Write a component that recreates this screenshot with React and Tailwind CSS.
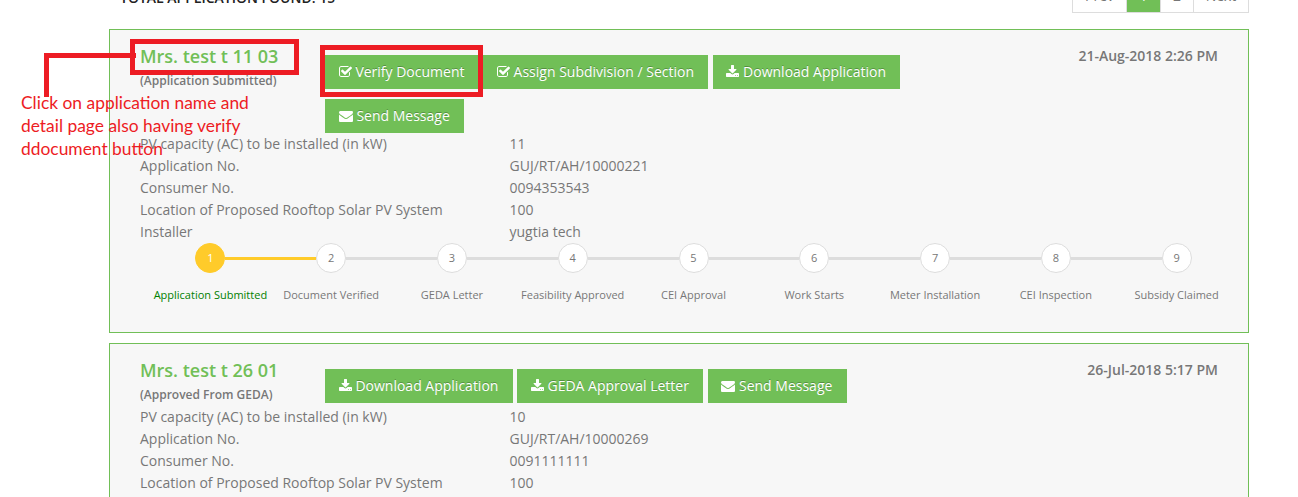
import React from 'react';

const PATHS = {
  check:
    'M1472 930v318q0 119-84.5 203.5t-203.5 84.5h-832q-119 0-203.5-84.5t-84.5-203.5v-832q0-119 84.5-203.5t203.5-84.5h832q63 0 117 25 15 7 18 23 3 17-9 29l-49 49q-10 10-23 10-3 0-9-2-23-6-45-6h-832q-66 0-113 47t-47 113v832q0 66 47 113t113 47h832q66 0 113-47t47-113v-254q0-13 9-22l64-64q10-10 23-10 6 0 12 3 20 8 20 29zm231-489l-814 814q-24 24-57 24t-57-24l-430-430q-24-24-24-57t24-57l110-110q24-24 57-24t57 24l263 263 647-647q24-24 57-24t57 24l110 110q24 24 24 57t-24 57z',
  download:
    'M1344 1344q0-26-19-45t-45-19-45 19-19 45 19 45 45 19 45-19 19-45zm256 0q0-26-19-45t-45-19-45 19-19 45 19 45 45 19 45-19 19-45zm128-224v320q0 40-28 68t-68 28h-1472q-40 0-68-28t-28-68v-320q0-40 28-68t68-28h465l135 136q58 56 136 56t136-56l136-136h464q40 0 68 28t28 68zm-325-569q17 41-14 70l-448 448q-18 19-45 19t-45-19l-448-448q-31-29-14-70 17-39 59-39h256v-448q0-26 19-45t45-19h256q26 0 45 19t19 45v448h256q42 0 59 39z',
  mail:
    'M1792 710v794q0 66-47 113t-113 47h-1472q-66 0-113-47t-47-113v-794q44 49 101 87 362 246 497 345 57 42 92.5 65.5t94.5 48 110 24.5h2q51 0 110-24.5t94.5-48 92.5-65.5q170-123 498-345 57-39 100-87zm0-294q0 79-49 151t-122 123q-376 261-468 325-10 7-42.5 31t-54 38.5-52 32.5-57.5 27-50 9h-2q-23 0-50-9t-57.5-27-52-32.5-54-38.5-42.5-31q-91-64-262-182.5t-205-142.5q-62-42-117-115.5t-55-136.5q0-78 41.5-130t118.5-52h1472q65 0 112.5 47t47.5 113z',
};

// Each glyph is cropped to its own advance width.
const BOXES = {
  check: { viewBox: '64 0 1664 1792', cls: 'h-[14px] w-[13px]' },
  download: { viewBox: '64 0 1664 1792', cls: 'h-[14px] w-[13px]' },
  mail: { viewBox: '0 0 1792 1792', cls: 'h-[14px] w-[14px]' },
};

function ActionButton({ icon, children }) {
  const box = BOXES[icon];
  return (
    <button className="flex h-[34px] items-center gap-[3.6px] whitespace-nowrap bg-[#71bf57] pl-[13.8px] pr-[14.2px] text-sm text-white [text-shadow:0_-1px_0_rgba(0,0,0,0.25)]">
      <svg className={box.cls} viewBox={box.viewBox} fill="currentColor">
        <path d={PATHS[icon]} />
      </svg>
      <span>{children}</span>
    </button>
  );
}

const STEPS = [
  'Application Submitted',
  'Document Verified',
  'GEDA Letter',
  'Feasibility Approved',
  'CEI Approval',
  'Work Starts',
  'Meter Installation',
  'CEI Inspection',
  'Subsidy Claimed',
];

function Stepper() {
  return (
    <ol className="ml-[10px] grid w-[1087px] grid-cols-9">
      {STEPS.map((label, i) => (
        <li key={label} className="flex flex-col items-center">
          <div className="flex w-full items-center">
            <div
              className={
                'h-[3px] flex-1 ' +
                (i === 0 ? 'bg-transparent' : i === 1 ? 'bg-[#ffcb2a]' : 'bg-[#dddddd]')
              }
            />
            <div
              className={
                'flex h-[30px] w-[30px] items-center justify-center rounded-full border text-[11px] ' +
                (i === 0
                  ? 'border-[#ffcb2a] bg-[#ffcb2a] text-white'
                  : 'border-[#dddddd] bg-white text-[#777777]')
              }
            >
              {i + 1}
            </div>
            <div
              className={
                'h-[3px] flex-1 ' +
                (i === 8 ? 'bg-transparent' : i === 0 ? 'bg-[#ffcb2a]' : 'bg-[#dddddd]')
              }
            />
          </div>
          <span
            className={
              'mt-[11px] whitespace-nowrap text-[11px] leading-[22px] ' +
              (i === 0 ? 'text-[#008000]' : 'text-[#777777]')
            }
          >
            {label}
          </span>
        </li>
      ))}
    </ol>
  );
}

function Card({ name, status, date, buttons, rows, headerClass, cardClass, steps }) {
  return (
    <section className={'border border-[#71bf57] bg-[#f7f7f7] px-[30px] ' + cardClass}>
      <header className={'flex items-start ' + headerClass}>
        <div className="w-[185px] shrink-0 pt-[13px] font-semibold">
          <h2 className="text-[18px] leading-[26px] text-[#71bf57]">{name}</h2>
          <p className="mt-px text-[12px] leading-[22px]">({status})</p>
        </div>
        <div className="flex w-[640px] flex-wrap gap-x-[4.5px] gap-y-[10px] pt-[25px]">
          {buttons.map(([icon, label]) => (
            <ActionButton key={label} icon={icon}>
              {label}
            </ActionButton>
          ))}
        </div>
        <time className="ml-auto whitespace-nowrap pt-[15px] font-semibold leading-[22px]">{date}</time>
      </header>
      <dl>
        {rows.map(([k, v]) => (
          <div key={k} className="flex h-[22px] leading-[22px]">
            <dt className="w-[369.5px]">{k}</dt>
            <dd>{v}</dd>
          </div>
        ))}
      </dl>
      {steps && <Stepper />}
    </section>
  );
}

export default function App() {
  return (
    <div className="relative h-[497px] w-[1298px] overflow-hidden bg-white font-['Open_Sans','Noto_Sans',sans-serif] text-sm text-[#777777]">
      <div className="mx-[109px] w-[1140px]">
        <div className="flex h-[29px] items-start justify-between">
          <h1 className="-mt-[13px] pl-[11px] font-semibold leading-[22px] text-[#222222]">
            TOTAL APPLICATION FOUND: 15
          </h1>
          <nav className="-mt-[21px] flex h-[34px] border border-[#dddddd] leading-[32px]">
            <span className="w-[53px] text-center">Prev</span>
            <span className="w-[34px] border-l border-[#dddddd] bg-[#71bf57] text-center text-white">1</span>
            <span className="w-[33px] border-l border-[#dddddd] text-center">2</span>
            <span className="w-[55px] border-l border-[#dddddd] text-center">Next</span>
          </nav>
        </div>
        <Card
          name="Mrs. test t 11 03"
          status="Application Submitted"
          date="21-Aug-2018 2:26 PM"
          cardClass="h-[304px]"
          headerClass="h-[103px]"
          buttons={[
            ['check', 'Verify Document'],
            ['check', 'Assign Subdivision / Section'],
            ['download', 'Download Application'],
            ['mail', 'Send Message'],
          ]}
          rows={[
            ['PV capacity (AC) to be installed (in kW)', '11'],
            ['Application No.', 'GUJ/RT/AH/10000221'],
            ['Consumer No.', '0094353543'],
            ['Location of Proposed Rooftop Solar PV System', '100'],
            ['Installer', 'yugtia tech'],
          ]}
          steps
        />
        <Card
          name="Mrs. test t 26 01"
          status="Approved From GEDA"
          date="26-Jul-2018 5:17 PM"
          cardClass="mt-[10px] h-[304px]"
          headerClass="h-[62px]"
          buttons={[
            ['download', 'Download Application'],
            ['download', 'GEDA Approval Letter'],
            ['mail', 'Send Message'],
          ]}
          rows={[
            ['PV capacity (AC) to be installed (in kW)', '10'],
            ['Application No.', 'GUJ/RT/AH/10000269'],
            ['Consumer No.', '0091111111'],
            ['Location of Proposed Rooftop Solar PV System', '100'],
          ]}
        />
      </div>

      {/* Review markup drawn over the page */}
      <div className="absolute left-[130px] top-[39px] h-[36px] w-[169px] border-[5px] border-[#ed1c24]" />
      <div className="absolute left-[320px] top-[45px] h-[52px] w-[163px] border-[5px] border-[#ed1c24]" />
      <div className="absolute left-[44px] top-[53px] h-[44px] w-[92px] border-l-[5px] border-t-[5px] border-[#ed1c24]" />
      <p className="absolute left-[21px] top-[91px] whitespace-nowrap font-['Lato',sans-serif] text-[17.4px] leading-[23px] text-[#ed1c24]">
        Click on application name and
        <br />
        detail page also having verify
        <br />
        ddocument button
      </p>
    </div>
  );
}
